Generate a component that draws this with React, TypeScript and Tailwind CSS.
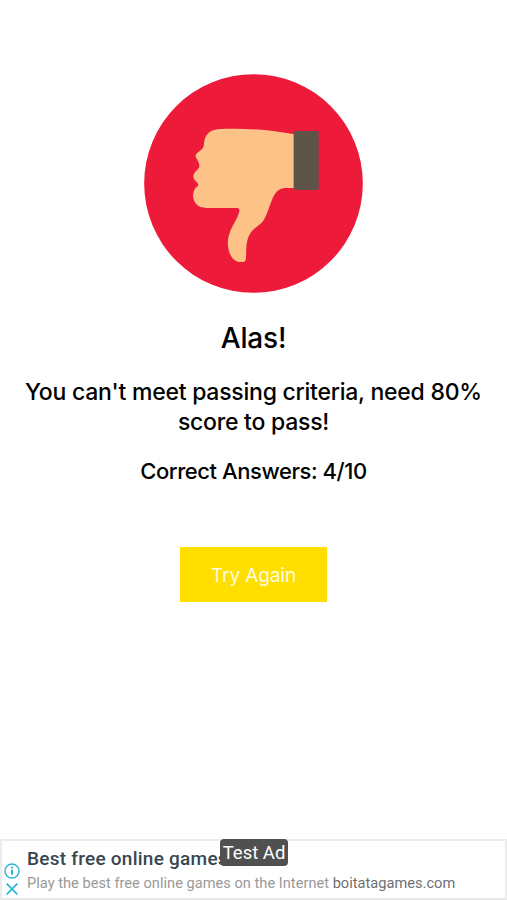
function ThumbsDown() {
  return (
    <svg viewBox="12 12 657 657" className="h-[219px] w-[219px]" aria-hidden="true">
      <circle cx="340.5" cy="340.5" r="328" fill="#ed1b39" />
      {/* hand */}
      <path
        d="M464 193 C405 182 340 175 270 176 C246 176 230 177 219 181 C200 189 194 202 192 221 C192 232 187 236 179 243 C171 250 165 253 167 260 C171 269 179 278 178 289 C177 298 172 299 166 305 C159 313 158 322 164 330 C168 336 176 341 175 345 C174 349 168 351 164 358 C158 370 157 385 165 397 C173 410 184 414 200 414 L292 414 C299 415 299 421 297 428 C291 451 269 473 264 509 C261 541 273 570 294 575 C303 577 312 577 316 572 C321 562 315 534 323 508 C334 473 357 470 370 452 C388 425 391 386 411 364 C423 351 443 354 464 354 Z"
        fill="#fcc287"
      />
      {/* cuff */}
      <rect x="461" y="183" width="75" height="177" rx="5" fill="#5e5349" />
    </svg>
  )
}

function InfoIcon() {
  return (
    <svg viewBox="0 0 16 16" className="h-4 w-4" fill="none" stroke="currentColor" aria-hidden="true">
      <circle cx="8" cy="8" r="7" strokeWidth="1.4" />
      <path d="M8 6.7v5.1" strokeWidth="2" />
      <path d="M8 3.7v1.9" strokeWidth="2" />
    </svg>
  )
}

function CloseIcon() {
  return (
    <svg viewBox="0 0 12 12" className="h-3 w-3" fill="none" stroke="currentColor" aria-hidden="true">
      <path d="M.7.7l10.6 10.6M11.3.7L.7 11.3" strokeWidth="1.7" />
    </svg>
  )
}

const result = {
  correct: 4,
  total: 10,
  passing: 80,
}

function AdBanner() {
  return (
    <div className="relative h-[61px] border-2 border-t-[#ececec] border-r-[#ececec] border-b-[#e8e8e8] border-l-[#ececec] bg-white font-[Roboto,sans-serif]">
      <div className="flex h-full">
        <div className="flex w-[25px] shrink-0 flex-col items-center gap-1 pt-[22px] pr-[6px] text-[#2db5d6]">
          <InfoIcon />
          <CloseIcon />
        </div>
        <div className="whitespace-nowrap">
          <p className="mt-[6px] text-[19px] leading-6 font-medium tracking-[0.25px] text-[#37474f]">
            Best free online games
          </p>
          <p className="mt-px text-[14.6px] leading-[22px] tracking-[0.02px] text-[#999]">
            Play the best free online games on the Internet{' '}
            <span className="text-[#707070]">boitatagames.com</span>
          </p>
        </div>
      </div>
      <span className="absolute -top-[2px] left-[218px] flex h-[27px] w-[68px] items-center justify-center rounded-[4px] bg-[#505050] pt-[2px] text-[18.5px] whitespace-nowrap text-white">
        Test Ad
      </span>
    </div>
  )
}

export default function App() {
  return (
    <div className="flex h-[900px] w-[507px] flex-col overflow-hidden bg-white font-[Inter,sans-serif] text-black">
      <main className="flex flex-1 flex-col items-center pt-[74px] text-center">
        <ThumbsDown />
        <h1 className="mt-[27px] text-[28px] leading-9 font-medium tracking-[-0.2px]">Alas!</h1>
        <p className="mt-[21px] text-[23px] leading-[30px] font-medium tracking-[-0.24px] whitespace-nowrap">
          You can't meet passing criteria, need {result.passing}%
          <br />
          score to pass!
        </p>
        <p className="mt-[19px] text-[22px] leading-[30px] font-medium tracking-[-0.43px]">
          Correct Answers: {result.correct}/{result.total}
        </p>
        <button className="mt-[61px] h-[55px] w-[147px] bg-[#ffdf00] pt-[3px] text-[19px] tracking-[-0.1px] text-[#fffbe0]">
          Try Again
        </button>
      </main>
      <AdBanner />
    </div>
  )
}
